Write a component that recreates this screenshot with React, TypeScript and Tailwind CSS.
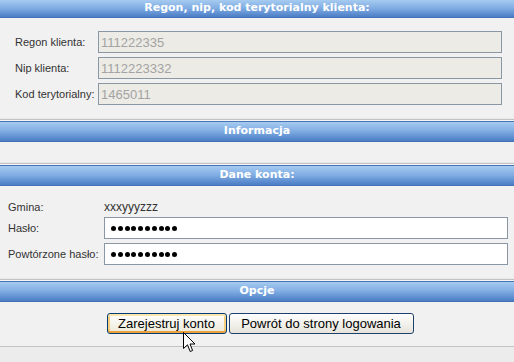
import React from "react";

const sans = "font-['Liberation_Sans',Arial,sans-serif]";

function Header({ title, first }: { title: string; first?: boolean }) {
  return (
    <div
      className={`${first ? "h-[18px]" : "h-[21px] border-t border-[#3f6dae]"} flex items-center justify-center bg-gradient-to-b from-[#a6cbf0] via-[#7eabe2] to-[#4b7dc6] border-b border-[#4573b8] text-white font-bold text-[11px] font-['DejaVu_Sans',Verdana,sans-serif]`}
    >
      {title}
    </div>
  );
}

function Separator() {
  return (
    <div className="flex flex-col">
      <div className="h-px bg-[#e6eaf0]" />
      <div className="h-px bg-[#c7c2bf]" />
      <div className="h-px bg-[#f6f6f6]" />
    </div>
  );
}

function ReadRow({ label, value }: { label: string; value: string }) {
  return (
    <div className="flex items-center">
      <div className="w-[83px] text-[11px] text-[#333]">{label}</div>
      <input
        readOnly
        value={value}
        className={`w-[404px] h-[22px] border border-[#8a98a6] bg-[#ecebe5] px-[2px] text-[13px] text-[#a3a3a3] outline-none ${sans}`}
      />
    </div>
  );
}

function PassRow({ label }: { label: string }) {
  return (
    <div className="flex items-center">
      <div className="w-[96px] text-[11px] text-[#333]">{label}</div>
      <div className="w-[404px] h-[22px] border border-[#8a98a6] bg-white flex items-center gap-[1.8px] pl-[6px]">
        {Array.from({ length: 10 }).map((_, i) => (
          <span key={i} className="w-[5px] h-[5px] rounded-full bg-black" />
        ))}
      </div>
    </div>
  );
}

export default function App() {
  return (
    <div className={`w-[514px] h-[362px] overflow-hidden bg-[#ececec] relative ${sans}`}>
      <Header title="Regon, nip, kod terytorialny klienta:" first />
      <div className="bg-[#f1f1f1] h-[100px] pl-[15px] pt-[13px] flex flex-col gap-[4px]">
        <ReadRow label="Regon klienta:" value="111222335" />
        <ReadRow label="Nip klienta:" value="1112223332" />
        <ReadRow label="Kod terytorialny:" value="1465011" />
      </div>
      <Separator />
      <Header title="Informacja" />
      <div className="bg-[#f1f1f1] h-[20px]" />
      <Separator />
      <Header title="Dane konta:" />
      <div className="bg-[#f1f1f1] h-[92px] pl-[8px] pt-[11px] flex flex-col">
        <div className="flex items-center h-[20px]">
          <div className="w-[96px] text-[11px] text-[#333]">Gmina:</div>
          <div className="text-[12px] text-[#333]">xxxyyyzzz</div>
        </div>
        <div className="flex flex-col gap-[4px]">
          <PassRow label="Hasło:" />
          <PassRow label="Powtórzone hasło:" />
        </div>
      </div>
      <Separator />
      <Header title="Opcje" />
      <div className="bg-[#f1f1f1] h-[45px] pt-[11px] flex justify-center gap-[2px] border-b border-[#c4c4c4] pl-[6px]">
        <button className="w-[120px] h-[21px] rounded-[3px] border border-[#003c74] bg-gradient-to-b from-white to-[#ece9d8] text-[13px] text-black leading-none shadow-[inset_0_2px_0_#fde7ae,inset_0_-2px_0_#eea03a,inset_2px_0_0_#f8cf7c,inset_-2px_0_0_#f8cf7c]">
          Zarejestruj konto
        </button>
        <button className="w-[185px] h-[21px] rounded-[3px] border border-[#1f3f6e] bg-gradient-to-b from-white to-[#e6e4da] text-[13px] text-black leading-none">
          Powrót do strony logowania
        </button>
      </div>
      <svg
        className="absolute left-[183px] top-[332px]"
        width="13"
        height="21"
        viewBox="0 0 13 21"
      >
        <path
          d="M0.5 0.5 L0.5 16.5 L4.5 12.8 L7.2 19.5 L9.6 18.5 L7 12 L12 12 Z"
          fill="white"
          stroke="black"
          strokeWidth="1"
          strokeLinejoin="miter"
        />
      </svg>
    </div>
  );
}
